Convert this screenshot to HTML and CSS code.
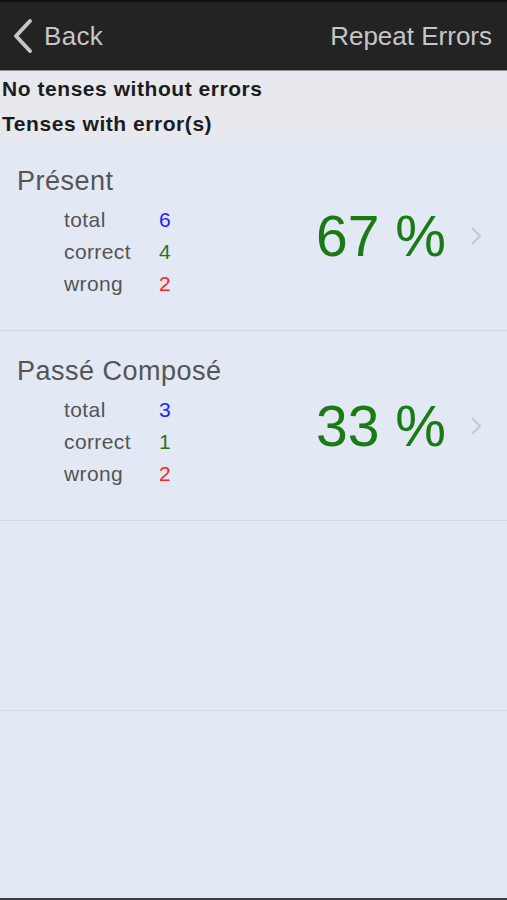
FILE: index.html
```html
<!DOCTYPE html>
<html lang="en">
<head>
  <meta charset="UTF-8">
  <meta name="viewport" content="width=device-width, initial-scale=1.0">
  <title>Repeat Errors</title>
  <link rel="stylesheet" href="styles.css">
</head>
<body>
  <div class="screen">
    <header class="navbar">
      <a class="back" href="#">
        <svg width="22" height="36" viewBox="0 0 22 36"><path d="M18 3 L4 18 L18 33" fill="none" stroke="#c6c6c6" stroke-width="4" stroke-linecap="round" stroke-linejoin="round"/></svg>
        <span>Back</span>
      </a>
      <h1>Repeat Errors</h1>
    </header>

    <div class="summary">
      <p>No tenses without errors</p>
      <p>Tenses with error(s)</p>
    </div>

    <ul class="tense-list">
      <li class="tense">
        <div class="info">
          <h2>Présent</h2>
          <dl class="stats">
            <dt>total</dt><dd class="total">6</dd>
            <dt>correct</dt><dd class="correct">4</dd>
            <dt>wrong</dt><dd class="wrong">2</dd>
          </dl>
        </div>
        <div class="score">67 %</div>
        <svg class="chevron" width="12" height="20" viewBox="0 0 12 20"><path d="M2 2 L10 10 L2 18" fill="none" stroke="#c5c8cf" stroke-width="2"/></svg>
      </li>
      <li class="tense">
        <div class="info">
          <h2>Passé Composé</h2>
          <dl class="stats">
            <dt>total</dt><dd class="total">3</dd>
            <dt>correct</dt><dd class="correct">1</dd>
            <dt>wrong</dt><dd class="wrong">2</dd>
          </dl>
        </div>
        <div class="score">33 %</div>
        <svg class="chevron" width="12" height="20" viewBox="0 0 12 20"><path d="M2 2 L10 10 L2 18" fill="none" stroke="#c5c8cf" stroke-width="2"/></svg>
      </li>
      <li class="tense empty"></li>
    </ul>
  </div>
</body>
</html>
```

FILE: styles.css
```css
* { box-sizing: border-box; margin: 0; padding: 0; }
body {
  font-family: 'Liberation Sans', Arial, sans-serif;
  background: #e2e8f4;
}
.screen {
  height: 900px;
  display: flex;
  flex-direction: column;
  background: #e2e8f4;
  border-bottom: 2px solid #3a3d44;
}
.navbar {
  height: 71px;
  background: #232323;
  border-top: 2px solid #111;
  border-bottom: 1px solid #8d8d8d;
  display: flex;
  justify-content: space-between;
  align-items: center;
  padding: 0 15px 0 12px;
}
.back {
  display: flex;
  align-items: center;
  gap: 10px;
  color: #c6c6c6;
  text-decoration: none;
  font-size: 26px;
  letter-spacing: 0.3px;
}
.navbar h1 {
  font-weight: normal;
  font-size: 26px;
  color: #c6c6c6;
}
.summary {
  background: #e8e9ee;
  padding: 0 2px;
}
.summary p {
  font-size: 21px;
  font-weight: bold;
  line-height: 35px;
  letter-spacing: 0.55px;
  color: #1c1c1e;
}
.tense-list { list-style: none; }
.tense {
  height: 190px;
  border-bottom: 1px solid #d2d7e1;
  display: flex;
  align-items: center;
  padding-right: 25px;
}
.info {
  flex: 1;
  align-self: stretch;
  padding: 20px 0 0 17px;
}
.info h2 {
  font-weight: normal;
  font-size: 27px;
  line-height: 40px;
  letter-spacing: 0.5px;
  color: #555;
  margin-bottom: 3px;
}
.stats {
  display: grid;
  grid-template-columns: 95px auto;
  padding-left: 47px;
  font-size: 21px;
  line-height: 32px;
  letter-spacing: 0.4px;
  color: #555;
}
.stats .total { color: #1f1fff; }
.stats .correct { color: #1d7a1d; }
.stats .wrong { color: #ff2323; }
.score {
  font-size: 57px;
  color: #1a7a14;
  margin-right: 24px;
}
```
